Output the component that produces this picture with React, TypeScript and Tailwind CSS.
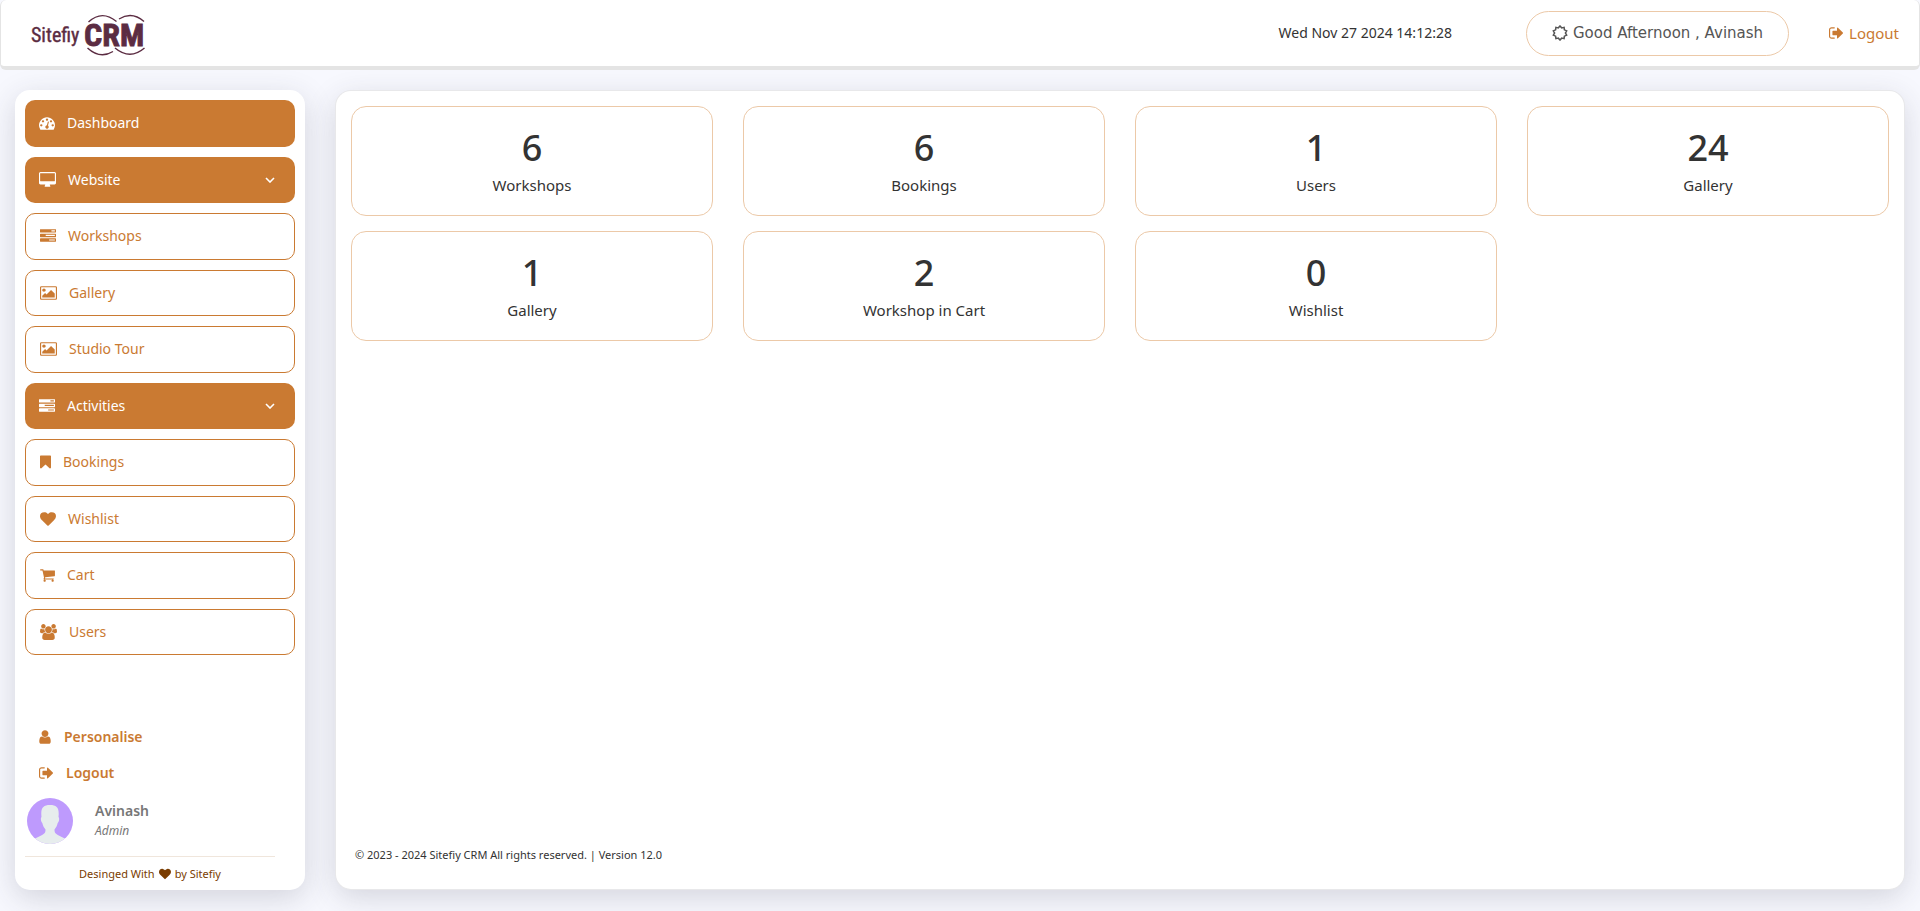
import type { ReactNode } from 'react';

const icons = {
  dashboard: {
    viewBox: '0 0 1792 1792',
    size: 'w-4',
    d: 'M384 1152q0-53-37.5-90.5t-90.5-37.5-90.5 37.5-37.5 90.5 37.5 90.5 90.5 37.5 90.5-37.5 37.5-90.5zm192-448q0-53-37.5-90.5t-90.5-37.5-90.5 37.5-37.5 90.5 37.5 90.5 90.5 37.5 90.5-37.5 37.5-90.5zm428 481l101-382q6-26-7.5-48.5t-38.5-29.5-48 6.5-30 39.5l-101 382q-60 5-107 43.5t-63 98.5q-20 77 20 146t117 89 146-20 89-117q16-60-6-117t-72-91zm660-33q0-53-37.5-90.5t-90.5-37.5-90.5 37.5-37.5 90.5 37.5 90.5 90.5 37.5 90.5-37.5 37.5-90.5zm-640-640q0-53-37.5-90.5t-90.5-37.5-90.5 37.5-37.5 90.5 37.5 90.5 90.5 37.5 90.5-37.5 37.5-90.5zm448 192q0-53-37.5-90.5t-90.5-37.5-90.5 37.5-37.5 90.5 37.5 90.5 90.5 37.5 90.5-37.5 37.5-90.5zm320 448q0 261-141 483-19 29-54 29h-1402q-35 0-54-29-141-221-141-483 0-182 71-348t191-286 286-191 348-71 348 71 286 191 191 286 71 348z',
  },
  desktop: {
    viewBox: '0 0 1920 1792',
    size: 'w-[17px]',
    d: 'M1792 992v-832q0-13-9.5-22.5t-22.5-9.5h-1600q-13 0-22.5 9.5t-9.5 22.5v832q0 13 9.5 22.5t22.5 9.5h1600q13 0 22.5-9.5t9.5-22.5zm128-832v1088q0 66-47 113t-113 47h-544q0 37 16 77.5t32 71 16 43.5q0 26-19 45t-45 19h-512q-26 0-45-19t-19-45q0-14 16-44t32-70 16-78h-544q-66 0-113-47t-47-113v-1088q0-66 47-113t113-47h1600q66 0 113 47t47 113z',
  },
  tasks: {
    viewBox: '0 0 1792 1792',
    size: 'w-4',
    d: 'M1024 1408h640v-128h-640v128zm-384-512h1024v-128h-1024v128zm640-512h384v-128h-384v128zm512 832v256q0 26-19 45t-45 19h-1664q-26 0-45-19t-19-45v-256q0-26 19-45t45-19h1664q26 0 45 19t19 45zm0-512v256q0 26-19 45t-45 19h-1664q-26 0-45-19t-19-45v-256q0-26 19-45t45-19h1664q26 0 45 19t19 45zm0-512v256q0 26-19 45t-45 19h-1664q-26 0-45-19t-19-45v-256q0-26 19-45t45-19h1664q26 0 45 19t19 45z',
  },
  picture: {
    viewBox: '0 0 1920 1792',
    size: 'w-[17px]',
    d: 'M640 576q0 80-56 136t-136 56-136-56-56-136 56-136 136-56 136 56 56 136zm1024 384v448h-1408v-192l320-320 160 160 512-512zm96-704h-1600q-13 0-22.5 9.5t-9.5 22.5v1216q0 13 9.5 22.5t22.5 9.5h1600q13 0 22.5-9.5t9.5-22.5v-1216q0-13-9.5-22.5t-22.5-9.5zm160 32v1216q0 66-47 113t-113 47h-1600q-66 0-113-47t-47-113v-1216q0-66 47-113t113-47h1600q66 0 113 47t47 113z',
  },
  bookmark: {
    viewBox: '256 0 1280 1792',
    size: 'w-[11px]',
    d: 'M1420 128q23 0 44 9 33 13 52.5 41t19.5 62v1289q0 34-19.5 62t-52.5 41q-19 8-44 8-48 0-83-32l-441-424-441 424q-36 33-83 33-23 0-44-9-33-13-52.5-41t-19.5-62v-1289q0-34 19.5-62t52.5-41q21-9 44-9h1048z',
  },
  heart: {
    viewBox: '0 0 1792 1792',
    size: 'w-4',
    d: 'M896 1664q-26 0-44-18l-624-602q-10-8-27.5-26t-55.5-65.5-68-97.5-53.5-121-23.5-138q0-220 127-344t351-124q62 0 126.5 21.5t120 58 95.5 68.5 76 68q36-36 76-68t95.5-68.5 120-58 126.5-21.5q224 0 351 124t127 344q0 221-229 450l-623 600q-18 18-44 18z',
  },
  cart: {
    viewBox: '64 0 1664 1792',
    size: 'w-[15px]',
    d: 'M704 1536q0 52-38 90t-90 38-90-38-38-90 38-90 90-38 90 38 38 90zm896 0q0 52-38 90t-90 38-90-38-38-90 38-90 90-38 90 38 38 90zm128-1088v512q0 24-16.5 42.5t-40.5 21.5l-1044 122q13 60 13 70 0 16-24 64h920q26 0 45 19t19 45-19 45-45 19h-1024q-26 0-45-19t-19-45q0-11 8-31.5t16-36 21.5-40 15.5-29.5l-177-823h-204q-26 0-45-19t-19-45 19-45 45-19h256q16 0 28.5 6.5t19.5 15.5 13 24.5 8 26 5.5 29.5 4.5 26h1201q26 0 45 19t19 45z',
  },
  users: {
    viewBox: '0 0 1920 1792',
    size: 'w-[17px]',
    d: 'M593 896q-162 5-265 128h-134q-82 0-138-40.5t-56-118.5q0-353 124-353 6 0 43.5 21t97.5 42.5 119 21.5q67 0 133-23-5 37-5 66 0 139 81 256zm1071 637q0 120-73 189.5t-194 69.5h-874q-121 0-194-69.5t-73-189.5q0-53 3.5-103.5t14-109 26.5-108.5 43-97.5 62-81 85.5-53.5 111.5-20q10 0 43 21.5t73 48 107 48 135 21.5 135-21.5 107-48 73-48 43-21.5q61 0 111.5 20t85.5 53.5 62 81 43 97.5 26.5 108.5 14 109 3.5 103.5zm-1024-1277q0 106-75 181t-181 75-181-75-75-181 75-181 181-75 181 75 75 181zm704 384q0 159-112.5 271.5t-271.5 112.5-271.5-112.5-112.5-271.5 112.5-271.5 271.5-112.5 271.5 112.5 112.5 271.5zm576 225q0 78-56 118.5t-138 40.5h-134q-103-123-265-128 81-117 81-256 0-29-5-66 66 23 133 23 59 0 119-21.5t97.5-42.5 43.5-21q124 0 124 353zm-128-609q0 106-75 181t-181 75-181-75-75-181 75-181 181-75 181 75 75 181z',
  },
  user: {
    viewBox: '256 0 1280 1792',
    size: 'w-3',
    d: 'M1536 1399q0 109-62.5 187t-150.5 78h-854q-88 0-150.5-78t-62.5-187q0-85 8.5-160.5t31.5-152 58.5-131 94-89 134.5-34.5q131 128 313 128t313-128q76 0 134.5 34.5t94 89 58.5 131 31.5 152 8.5 160.5zm-256-887q0 159-112.5 271.5t-271.5 112.5-271.5-112.5-112.5-271.5 112.5-271.5 271.5-112.5 271.5 112.5 112.5 271.5z',
  },
  signOut: {
    viewBox: '64 0 1568 1792',
    size: 'w-[14px]',
    d: 'M704 1440q0 4 1 20t.5 26.5-3 23.5-10 19.5-20.5 6.5h-320q-119 0-203.5-84.5t-84.5-203.5v-704q0-119 84.5-203.5t203.5-84.5h320q13 0 22.5 9.5t9.5 22.5q0 4 1 20t.5 26.5-3 23.5-10 19.5-20.5 6.5h-320q-66 0-113 47t-47 113v704q0 66 47 113t113 47h312l11.5 1 11.5 3 8 5.5 7 9 2 13.5zm928-544q0 26-19 45l-544 544q-19 19-45 19t-45-19-19-45v-288h-448q-26 0-45-19t-19-45v-384q0-26 19-45t45-19h448v-288q0-26 19-45t45-19 45 19l544 544q19 19 19 45z',
  },
};

type IconName = keyof typeof icons;

function Icon({ name }: { name: IconName }) {
  const { viewBox, size, d } = icons[name];
  return (
    <svg viewBox={viewBox} className={`h-4 shrink-0 ${size}`} fill="currentColor" aria-hidden="true">
      <path d={d} />
    </svg>
  );
}

function ChevronDown() {
  return (
    <svg viewBox="0 0 10 6" className="mr-1.5 ml-auto h-[6px] w-[10px]" fill="none" stroke="currentColor" strokeWidth="1.6" aria-hidden="true">
      <path d="M1 1l4 4 4-4" />
    </svg>
  );
}

function SunIcon() {
  // ten-pointed outline around a hollow disc
  const points = Array.from({ length: 20 }, (_, i) => {
    const r = i % 2 === 0 ? 7 : 5.4;
    const a = (Math.PI * i) / 10 - Math.PI / 2;
    return `${(8 + r * Math.cos(a)).toFixed(2)},${(8 + r * Math.sin(a)).toFixed(2)}`;
  }).join(' ');
  return (
    <svg viewBox="0 0 16 16" className="size-4" fill="none" stroke="currentColor" strokeWidth="1.5" aria-hidden="true">
      <polygon points={points} />
    </svg>
  );
}

function Logo() {
  return (
    <svg viewBox="0 0 114 46" className="h-[46px] w-[114px]" role="img" aria-label="Sitefiy CRM" fill="#5b2c42">
      <text x="0" y="32" fontSize="20" fontFamily="'Liberation Sans Narrow', 'Roboto Condensed', sans-serif" stroke="#5b2c42" strokeWidth="0.4">
        Sitefiy
      </text>
      <text x="53" y="36" fontSize="32" fontWeight="700" fontFamily="'Liberation Sans Narrow', 'Roboto Condensed', sans-serif" stroke="#5b2c42" strokeWidth="0.8">
        CRM
      </text>
      <g fill="none" stroke="#5b2c42" strokeWidth="1.4">
        <path d="M57.500 12Q71 -.5 85.500 11.500" />
        <path d="M88 9Q101 1 113 11.500" />
        <path d="M56.500 38Q69 49.500 82 41.500" />
        <path d="M84 38Q99 50.500 113.500 38" />
      </g>
    </svg>
  );
}

function Avatar() {
  return (
    <svg viewBox="0 0 46 46" className="size-[46px]" role="img" aria-label="Avinash">
      <defs>
        <clipPath id="avatar">
          <circle cx="23" cy="23" r="23" />
        </clipPath>
      </defs>
      <g clipPath="url(#avatar)">
        <rect width="46" height="46" fill="#be9afd" />
        <path
          fill="#e7eded"
          d="M14.500 19C13.500 10 16 7 23 7s9.500 3 8.500 12c1.200 1 .6 5-.8 6-.7 3-1.700 4.500-3.200 6.500 0 4 .8 4.500 10.500 9V47H8v-6.500c9.700-4.500 10.500-5 10.500-9-1.500-2-2.500-3.500-3.200-6.500-1.400-1-2-5-.8-6z"
        />
      </g>
    </svg>
  );
}

type MenuItem = { label: string; icon: IconName; solid?: boolean; group?: boolean };

const menu: MenuItem[] = [
  { label: 'Dashboard', icon: 'dashboard', solid: true },
  { label: 'Website', icon: 'desktop', solid: true, group: true },
  { label: 'Workshops', icon: 'tasks' },
  { label: 'Gallery', icon: 'picture' },
  { label: 'Studio Tour', icon: 'picture' },
  { label: 'Activities', icon: 'tasks', solid: true, group: true },
  { label: 'Bookings', icon: 'bookmark' },
  { label: 'Wishlist', icon: 'heart' },
  { label: 'Cart', icon: 'cart' },
  { label: 'Users', icon: 'users' },
];

const stats = [
  { value: 6, label: 'Workshops' },
  { value: 6, label: 'Bookings' },
  { value: 1, label: 'Users' },
  { value: 24, label: 'Gallery' },
  { value: 1, label: 'Gallery' },
  { value: 2, label: 'Workshop in Cart' },
  { value: 0, label: 'Wishlist' },
];

function MenuEntry({ label, icon, solid, group }: MenuItem) {
  const base = 'flex w-full items-center gap-3 rounded-[10px] text-sm';
  const look = solid ? 'bg-[#ca7a32] px-[14px] text-white' : 'border border-[#ca7a32] px-[14px] text-[#ca7a32]';
  const body: ReactNode = (
    <>
      <Icon name={icon} />
      <span>{label}</span>
      {group && <ChevronDown />}
    </>
  );
  return group ? (
    <button type="button" className={`${base} ${look}`}>{body}</button>
  ) : (
    <a href="#" className={`${base} ${look}`}>{body}</a>
  );
}

function Header() {
  return (
    <header className="flex items-center justify-between rounded-md border-x border-b-4 border-[#e4e4e4] bg-white py-[10px] pr-5 pl-[30px]">
      <Logo />
      <div className="flex items-center">
        <time className="mr-[74px] text-sm text-[#333]">Wed Nov 27 2024 14:12:28</time>
        <div className="mr-10 flex h-[45px] items-center gap-[5px] rounded-full border border-[#ecc9a8] px-[25px] text-[#555]">
          <SunIcon />
          <span className="font-['DejaVu_Sans',sans-serif] text-[15px]">Good Afternoon , Avinash</span>
        </div>
        <a href="#" className="flex items-center gap-1.5 text-[15px] text-[#ca7a32]">
          <Icon name="signOut" />
          Logout
        </a>
      </div>
    </header>
  );
}

function Sidebar() {
  return (
    <aside className="flex w-[290px] shrink-0 flex-col rounded-[15px] bg-white px-[10px] pt-[10px] pb-1.5 shadow-[0_8px_30px_rgba(50,50,65,0.18)]">
      <nav className="grid h-[555px] auto-rows-fr gap-[10px]">
        {menu.map((item) => (
          <MenuEntry key={item.label} {...item} />
        ))}
      </nav>
      <div className="mt-auto w-[250px]">
        <div className="flex flex-col gap-3 px-[14px] text-sm font-semibold text-[#ca7a32]">
          <a href="#" className="flex h-6 items-center gap-[13px]">
            <Icon name="user" />
            Personalise
          </a>
          <a href="#" className="flex h-6 items-center gap-[13px]">
            <Icon name="signOut" />
            Logout
          </a>
        </div>
        <div className="mt-[13px] flex items-center gap-[22px] px-0.5">
          <Avatar />
          <div>
            <p className="text-sm font-semibold text-[#777]">Avinash</p>
            <p className="text-xs leading-5 text-[#777] italic">Admin</p>
          </div>
        </div>
        <p className="mt-3 flex items-center justify-center gap-1 border-t border-[#f0e6dc] pt-[7px] text-[11px] leading-5 text-[#7a3c00]">
          Desinged With
          <svg viewBox="0 0 1792 1792" className="size-3" fill="currentColor" aria-hidden="true">
            <path d={icons.heart.d} />
          </svg>
          by Sitefiy
        </p>
      </div>
    </aside>
  );
}

export default function App() {
  return (
    <div className="flex min-h-screen flex-col bg-[#f7f8fe] font-['Noto_Sans',sans-serif]">
      <Header />
      <div className="flex flex-1 gap-[31px] pt-5 pr-4 pb-[21px] pl-[15px]">
        <Sidebar />
        <main className="my-px flex min-w-0 flex-1 flex-col rounded-[15px] bg-white p-[15px] shadow-[0_0_0_1px_#e8e8ea,0_8px_30px_rgba(50,50,65,0.18)]">
          <div className="grid grid-cols-4 gap-x-[30px] gap-y-[15px]">
            {stats.map(({ value, label }, i) => (
              <section key={i} className="rounded-[15px] border border-[#ecc9a8] pt-[19px] pb-[14px] text-center text-[#333]">
                <p className="text-4xl leading-[44px] font-medium">{value}</p>
                <p className="text-[15px] leading-[31px]">{label}</p>
              </section>
            ))}
          </div>
          <footer className="mt-auto px-1 pb-[7px] text-[11px] leading-6 text-[#333]">
            © 2023 - 2024 Sitefiy CRM All rights reserved. | Version 12.0
          </footer>
        </main>
      </div>
    </div>
  );
}
